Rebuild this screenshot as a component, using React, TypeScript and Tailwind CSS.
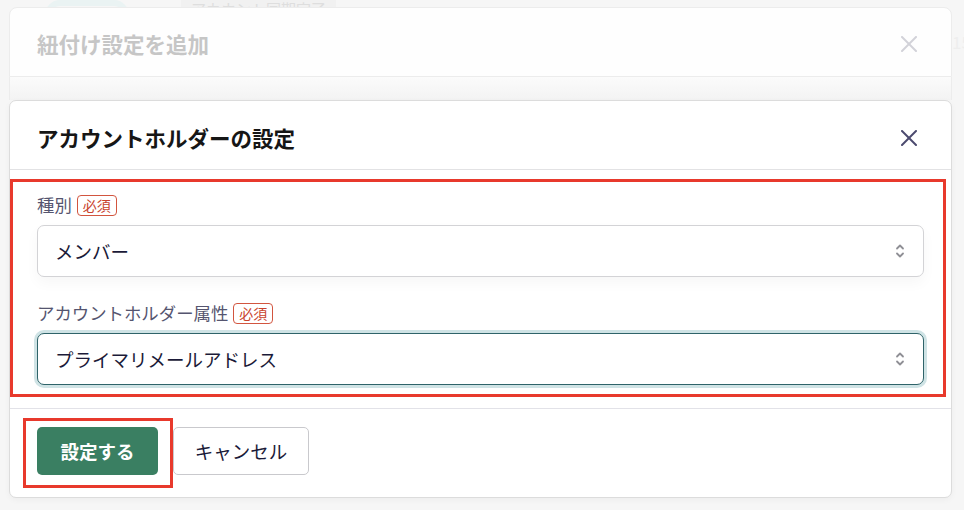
import React from 'react';

const FONT = { fontFamily: '"Noto Sans CJK JP", "Noto Sans", sans-serif' };

function CloseIcon({ color }: { color: string }) {
  return (
    <svg width="16" height="16" viewBox="0 0 16 16" fill="none" stroke={color} strokeWidth="2" strokeLinecap="round">
      <line x1="1" y1="1" x2="15" y2="15" />
      <line x1="15" y1="1" x2="1" y2="15" />
    </svg>
  );
}

function UpDown() {
  return (
    <svg width="10" height="16" viewBox="0 0 10 16" fill="none" stroke="#8f8f95" strokeWidth="1.8" strokeLinecap="round" strokeLinejoin="round">
      <polyline points="2,5.5 5,2.5 8,5.5" />
      <polyline points="2,10.5 5,13.5 8,10.5" />
    </svg>
  );
}

function Required() {
  return (
    <span className="ml-[5px] h-[21px] px-[5px] flex items-center rounded-[4px] border border-[#d2553f] text-[14px] leading-none text-[#c9432d]">
      必須
    </span>
  );
}

function Field({ label, value, focused }: { label: string; value: string; focused?: boolean }) {
  return (
    <div className="flex flex-col">
      <div className="h-[20px] flex items-center">
        <span className="text-[17.4px] leading-none text-[#55556f]">{label}</span>
        <Required />
      </div>
      <div
        className={`mt-[10px] h-[52px] rounded-[7px] bg-white flex items-center justify-between pl-[17px] pr-[18px] ${
          focused
            ? 'border-[1.5px] border-[#2f6369] shadow-[0_0_0_3px_#cfe3e5]'
            : 'border border-[#d3d3d6] shadow-[0_6px_14px_rgba(0,0,0,0.035)]'
        }`}
      >
        <span className="text-[18.5px] leading-none text-[#1b1a38]">{value}</span>
        <UpDown />
      </div>
    </div>
  );
}

export default function App() {
  return (
    <div className="w-[964px] h-[510px] bg-[#f6f6f6] overflow-hidden flex" style={FONT}>
      <div className="w-[952px] shrink-0 flex flex-col pl-[9px]">
        {/* faded page behind the dialogs */}
        <div className="h-[7px] overflow-hidden flex items-end">
          <div className="ml-[36px] w-[84px] h-[30px] rounded-full border-[6px] border-[#eaf3f3] -mb-[23px]" />
          <div className="ml-[52px] px-[10px] h-[20px] bg-[#f1f1f1] text-[15px] leading-[20px] text-[#dedede] -mb-[12px]">
            アカウント同期完了
          </div>
        </div>

        {/* back dialog */}
        <div className="h-[70px] rounded-t-[8px] border border-[#ececec] bg-[#fefefe] flex items-center justify-between pl-[27px] pr-[34px] pt-[3px]">
          <span className="text-[21.5px] leading-none font-bold text-[#c6c6c6]">紐付け設定を追加</span>
          <CloseIcon color="#d2d2d9" />
        </div>
        <div className="h-[23px] border-x border-[#ececec] bg-gradient-to-b from-[#fbfbfb] to-[#f3f3f3]" />

        {/* front dialog */}
        <div className="h-[398px] rounded-[7px] border border-[#dcdcdc] bg-white flex flex-col shadow-[0_2px_6px_rgba(0,0,0,0.04)]">
          <div className="h-[69px] shrink-0 border-b border-[#e2e2e4] flex items-center justify-between pl-[27px] pr-[34px] pt-[5px]">
            <span className="text-[21.5px] leading-none font-bold text-[#161616]">アカウントホルダーの設定</span>
            <CloseIcon color="#4b4a6e" />
          </div>

          <div className="h-[238px] shrink-0 pt-[9px] pr-[5px]">
            <div className="border-[3px] border-[#e8392c] pt-[13px] pb-[9px] pl-[24px] pr-[19px] flex flex-col gap-[26px]">
              <Field label="種別" value="メンバー" />
              <Field label="アカウントホルダー属性" value="プライマリメールアドレス" focused />
            </div>
          </div>

          <div className="flex-1 border-t border-[#e2e2e8] pt-[9px] pl-[13px] flex items-start">
            <div className="border-[3px] border-[#e8392c] pt-[6px] pb-[10px] pl-[11px] pr-[12px]">
              <button className="w-[121px] h-[48px] rounded-[5px] bg-[#3a7f62] text-white text-[18.5px] font-bold leading-none">
                設定する
              </button>
            </div>
            <button className="mt-[9px] w-[136px] h-[48px] rounded-[5px] border border-[#c9c9cd] bg-white text-[18.5px] leading-none text-[#1b1a38]">
              キャンセル
            </button>
          </div>
        </div>
      </div>

      <div className="flex-1 pt-[33px] text-[17px] leading-none text-[#eeeeee] overflow-hidden">15</div>
    </div>
  );
}
